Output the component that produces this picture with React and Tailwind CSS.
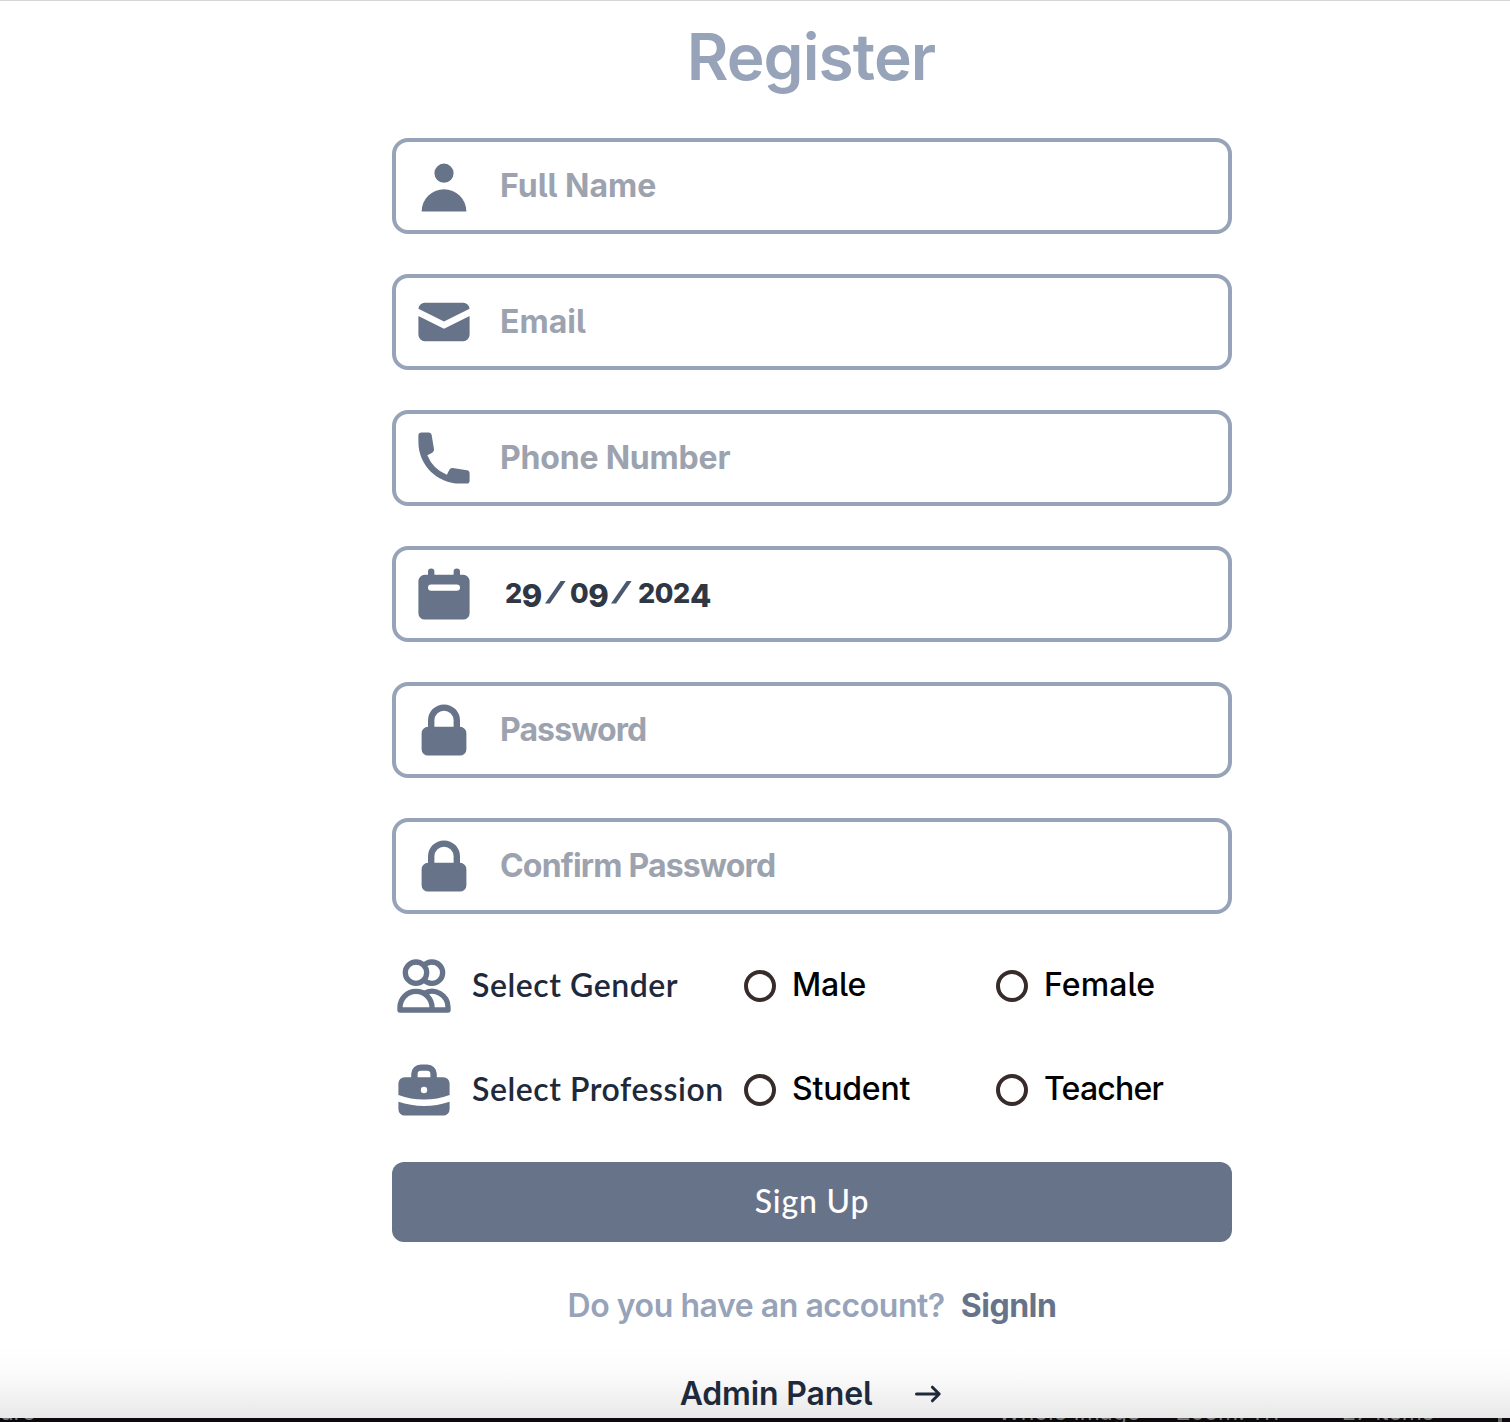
import React from 'react';

const INTER = "font-[Inter,sans-serif] [font-feature-settings:'cv05']";
const LATO = 'font-[Lato,sans-serif]';

const PATHS = {
  user: ['M10 9a3 3 0 100-6 3 3 0 000 6zm-7 9a7 7 0 1114 0H3z'],
  mail: [
    'M2.003 5.884L10 9.882l7.997-3.998A2 2 0 0016 4H4a2 2 0 00-1.997 1.884z',
    'M18 8.118l-8 4-8-4V14a2 2 0 002 2h12a2 2 0 002-2V8.118z',
  ],
  phone: [
    'M2 3a1 1 0 011-1h2.153a1 1 0 01.986.836l.74 4.435a1 1 0 01-.54 1.06l-1.548.773a11.037 11.037 0 006.105 6.105l.774-1.548a1 1 0 011.059-.54l4.435.74a1 1 0 01.836.986V17a1 1 0 01-1 1h-2C7.82 18 2 12.18 2 5V3z',
  ],
  calendar: [
    'M6 2a1 1 0 00-1 1v1H4a2 2 0 00-2 2v10a2 2 0 002 2h12a2 2 0 002-2V6a2 2 0 00-2-2h-1V3a1 1 0 10-2 0v1H7V3a1 1 0 00-1-1zm0 5a1 1 0 000 2h8a1 1 0 100-2H6z',
  ],
  lock: ['M5 9V7a5 5 0 0110 0v2a2 2 0 012 2v5a2 2 0 01-2 2H5a2 2 0 01-2-2v-5a2 2 0 012-2zm8-2v2H7V7a3 3 0 016 0z'],
  briefcase: [
    'M6 6V5a3 3 0 013-3h2a3 3 0 013 3v1h2a2 2 0 012 2v3.571A22.952 22.952 0 0110 13a22.95 22.95 0 01-8-1.429V8a2 2 0 012-2h2zm2-1a1 1 0 011-1h2a1 1 0 011 1v1H8V5zm1 5a1 1 0 011-1h.01a1 1 0 110 2H10a1 1 0 01-1-1z',
    'M2 13.692V16a2 2 0 002 2h12a2 2 0 002-2v-2.308A24.974 24.974 0 0110 15c-2.796 0-5.487-.46-8-1.308z',
  ],
};

function SolidIcon({ name }) {
  return (
    <svg viewBox="0 0 20 20" fill="currentColor" className="size-16 shrink-0 text-[#677389]">
      {PATHS[name].map((d) => (
        <path key={d} d={d} fillRule="evenodd" clipRule="evenodd" />
      ))}
    </svg>
  );
}

function UsersIcon() {
  return (
    <svg viewBox="0 0 24 24" fill="none" stroke="currentColor" strokeWidth="2" strokeLinecap="round" strokeLinejoin="round" className="size-16 shrink-0 text-[#677389]">
      <path d="M12 4.354a4 4 0 110 5.292M15 21H3v-1a6 6 0 0112 0v1zm0 0h6v-1a6 6 0 00-9-5.197M13 7a4 4 0 11-8 0 4 4 0 018 0z" />
    </svg>
  );
}

function Field({ icon, children }) {
  return (
    <div className="flex h-24 items-center rounded-2xl border-4 border-[#97a3b8] bg-white pl-4">
      <SolidIcon name={icon} />
      {children}
    </div>
  );
}

function TextField({ icon, label, type = 'text', tracking }) {
  return (
    <Field icon={icon}>
      <input
        type={type}
        placeholder={label}
        className={`ml-6 h-16 min-w-0 flex-1 pb-px text-[32px] font-bold outline-none placeholder:text-[#9ca3af] placeholder:opacity-100 ${INTER} ${tracking}`}
      />
    </Field>
  );
}

/* Old-style figure: same top as its neighbours, tail below the baseline. */
function Low({ children }) {
  return <span className="inline-block translate-y-[4px] text-[31px] leading-8 font-extrabold tracking-[-1px]">{children}</span>;
}

function Slash() {
  return <span className="mx-[4px] h-[23px] w-[21px] -translate-y-[2px] bg-[#4a5870] [clip-path:polygon(76%_0,100%_0,24%_100%,0_100%)]" />;
}

function Radio({ name, label, tracking }) {
  return (
    <label className="flex w-[252px] shrink-0 items-center last:w-auto">
      <input type="radio" name={name} className="size-8 shrink-0 appearance-none rounded-full border-4 border-[#382b2b] bg-white" />
      <span className={`ml-4 text-[32px] leading-10 font-medium text-black ${INTER} ${tracking}`}>
        <span className="inline-block -translate-y-[1px]">{label}</span>
      </span>
    </label>
  );
}

function Choice({ icon, title, tracking, children }) {
  return (
    <div className="flex h-16 items-center">
      {icon}
      <span className={`ml-4 w-[272px] shrink-0 -translate-y-[1px] text-[32px] leading-10 font-semibold whitespace-nowrap text-[#1e293b] ${LATO} ${tracking}`}>{title}</span>
      {children}
    </div>
  );
}

export default function App() {
  return (
    <div className="flex h-[1422px] flex-col overflow-hidden border-t border-[#d6d6d6] bg-white">
      <div className="flex h-[1417px] shrink-0 flex-col bg-[linear-gradient(to_bottom,#fff_0,#fff_1345px,#fcfcfc_1369px,#f4f4f4_1391px,#e8e8e8_1417px)] pl-[392px]">
        <form className="flex w-[840px] flex-col">
          <h1 className={`mt-[17px] mb-8 flex h-[88px] items-center justify-center text-[64px] leading-none font-semibold text-[#97a3b8] ${INTER}`}>
            <span className="-translate-x-px -translate-y-[5px] tracking-[-0.9px]">Register</span>
          </h1>
          <div className="flex flex-col gap-10">
            <TextField icon="user" label="Full Name" tracking="tracking-[0px]" />
            <TextField icon="mail" label="Email" tracking="tracking-[0px]" />
            <TextField icon="phone" label="Phone Number" tracking="tracking-[-0.2px]" />
            <Field icon="calendar">
              <div className={`ml-[29px] flex items-center text-[27px] leading-8 font-extrabold tracking-[-0.4px] text-[#2f3744] ${INTER}`}>
                <span className="w-[36px] -translate-y-px whitespace-nowrap">2<Low>9</Low></span>
                <Slash />
                <span className="w-[37px] -translate-y-px whitespace-nowrap">0<Low>9</Low></span>
                <Slash />
                <span className="ml-[2px] -translate-y-px whitespace-nowrap">202<Low>4</Low></span>
              </div>
            </Field>
            <TextField icon="lock" label="Password" type="password" tracking="tracking-[-0.9px]" />
            <TextField icon="lock" label="Confirm Password" type="password" tracking="tracking-[-0.82px]" />
          </div>
          <div className="mt-10 flex flex-col gap-10">
            <Choice icon={<UsersIcon />} title="Select Gender" tracking="tracking-[0.55px]">
              <Radio name="gender" label="Male" tracking="tracking-[-0.2px]" />
              <Radio name="gender" label="Female" tracking="tracking-[0.1px]" />
            </Choice>
            <Choice icon={<SolidIcon name="briefcase" />} title="Select Profession" tracking="tracking-[0.55px]">
              <Radio name="profession" label="Student" tracking="tracking-[-0.2px]" />
              <Radio name="profession" label="Teacher" tracking="tracking-[-0.8px]" />
            </Choice>
          </div>
          <button type="button" className={`mt-10 h-20 rounded-xl bg-[#677389] pb-[2px] text-[32px] font-medium tracking-[0.8px] text-white ${LATO}`}>
            Sign Up
          </button>
          <p className={`mt-10 flex h-12 items-center justify-center gap-4 pb-px text-[32px] leading-none ${INTER}`}>
            <span className="font-semibold tracking-[-0.45px] text-[#97a3b8]">Do you have an account?</span>
            <a className="font-bold tracking-[-0.5px] text-[#677389]">SignIn</a>
          </p>
          <a className={`mt-10 flex h-12 items-center justify-center text-[32px] leading-none font-semibold text-[#1e293b] ${INTER}`}>
            <span className="tracking-[-0.15px]">Admin Panel</span>
            <svg viewBox="0 0 32 32" fill="none" stroke="currentColor" strokeWidth="3" strokeLinecap="round" strokeLinejoin="round" className="ml-10 size-8">
              <path d="M4.5 16h22.5M20.4 9.2l6.8 6.8-6.8 6.8" />
            </svg>
          </a>
        </form>
      </div>
      <div className="flex h-[4px] shrink-0 items-end overflow-hidden bg-[#0b090b] font-[Inter,sans-serif] text-[23px] leading-[5px] whitespace-nowrap text-[#777]">
        <span className="w-[998px] shrink-0 -translate-y-[7px]">ure</span>
        <span className="w-[178px] shrink-0 -translate-y-[7px]">Whole Image</span>
        <span className="w-[166px] shrink-0 -translate-y-[7px]">Zoom: 111</span>
        <span className="w-[156px] shrink-0 -translate-y-[7px]">27 items</span>
        <span className="h-1 w-1 bg-[#666]" />
      </div>
    </div>
  );
}
